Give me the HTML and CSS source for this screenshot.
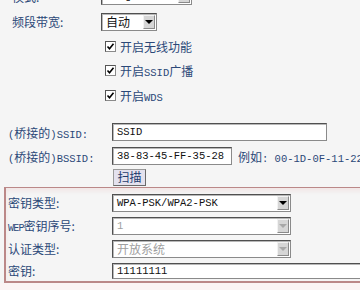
FILE: index.html
```html
<!DOCTYPE html>
<html lang="zh-CN">
<head>
    <meta charset="UTF-8">
    <title>无线网络基本设置</title>
    <link rel="stylesheet" href="styles.css">
</head>
<body>
    <div class="top">
        <div class="row r26">
            <span class="lbl lbl-top">模式:</span>
            <div class="sel w91"><span class="val en">11bgn mixed</span><i class="arr"></i></div>
        </div>
        <div class="row r25">
            <span class="lbl lbl-top">频段带宽:</span>
            <div class="sel w56"><span class="val">自动</span><i class="arr"></i></div>
        </div>
        <div class="checks">
            <label class="chk"><span class="box"><svg width="9" height="9" viewBox="0 0 9 9"><path d="M1.5 4.5l2 2.2 4-5" fill="none" stroke="#000" stroke-width="1.6"/></svg></span><span>开启无线功能</span></label>
            <label class="chk"><span class="box"><svg width="9" height="9" viewBox="0 0 9 9"><path d="M1.5 4.5l2 2.2 4-5" fill="none" stroke="#000" stroke-width="1.6"/></svg></span><span>开启<span class="en">SSID</span>广播</span></label>
            <label class="chk"><span class="box"><svg width="9" height="9" viewBox="0 0 9 9"><path d="M1.5 4.5l2 2.2 4-5" fill="none" stroke="#000" stroke-width="1.6"/></svg></span><span>开启<span class="en">WDS</span></span></label>
        </div>
    </div>

    <div class="bridge">
        <div class="row r24">
            <span class="lbl"><span class="en">(</span>桥接的<span class="en">)SSID:</span></span>
            <input class="inp w215" type="text" value="SSID">
        </div>
        <div class="row r24">
            <span class="lbl"><span class="en">(</span>桥接的<span class="en">)BSSID:</span></span>
            <input class="inp w120" type="text" value="38-83-45-FF-35-28">
            <span class="hint">例如<span class="en">: 00-1D-0F-11-22</span></span>
        </div>
        <div class="row r18">
            <span class="lbl"></span>
            <button class="btn" type="button">扫描</button>
        </div>
    </div>

    <div class="sec">
        <div class="row r23">
            <span class="lbl">密钥类型:</span>
            <div class="sel w179"><span class="val en">WPA-PSK/WPA2-PSK</span><i class="arr"></i></div>
        </div>
        <div class="row r23">
            <span class="lbl"><span class="en wep">WEP</span>密钥序号:</span>
            <div class="sel w179 off"><span class="val en">1</span><i class="arr"></i></div>
        </div>
        <div class="row r23">
            <span class="lbl">认证类型:</span>
            <div class="sel w179 off"><span class="val">开放系统</span><i class="arr"></i></div>
        </div>
        <div class="row r21">
            <span class="lbl">密钥:</span>
            <input class="inp key" type="text" value="11111111">
        </div>
    </div>
    <div class="foot"></div>
</body>
</html>
```

FILE: styles.css
```css
body {
    margin: 0;
    background-color: #f5f5f5;
    color: #2b4878;
    font-family: "Noto Sans CJK SC", sans-serif;
    font-size: 12px;
    overflow: hidden;
    height: 290px;
}
.en {
    font-family: "Liberation Mono", monospace;
    font-size: 10.5px;
}
.wep {
    font-size: 10px;
    letter-spacing: -0.8px;
}
.row {
    display: flex;
    align-items: center;
}
.r26 { height: 26px; }
.r25 { height: 25px; }
.r24 { height: 24px; }
.r23 { height: 23px; }
.r21 { height: 21px; }
.r18 { height: 18px; }

.top {
    margin-top: -17px;
    padding-left: 12px;
}
.lbl {
    width: 104px;
    flex-shrink: 0;
    white-space: nowrap;
}
.lbl-top {
    width: 89px;
}

/* select look-alike */
.sel {
    box-sizing: border-box;
    height: 18px;
    display: flex;
    align-items: center;
    justify-content: space-between;
    background-color: #fff;
    border: 1px solid #8a8a8a;
    border-top-color: #505050;
    border-left-color: #505050;
    box-shadow: inset 1px 1px 0 #b8b8b8;
    padding: 0 1px 0 4px;
    color: #111;
}
.w91 { width: 91px; }
.w56 { width: 56px; }
.w179 { width: 179px; }
.sel .arr {
    box-sizing: border-box;
    width: 12px;
    height: 14px;
    background-color: #d6d6d6;
    border: 1px solid #8a8a8a;
    border-top-color: #f2f2f2;
    border-left-color: #f2f2f2;
    display: flex;
    align-items: center;
    justify-content: center;
}
.sel .arr::after {
    content: "";
    border-left: 4px solid transparent;
    border-right: 4px solid transparent;
    border-top: 4px solid #000;
}
.sel.off .val {
    color: #a0a0a0;
}
.sel.off .arr::after {
    border-top-color: #a8a8a8;
}

/* checkboxes */
.checks {
    padding-left: 93px;
}
.chk {
    display: flex;
    align-items: center;
    height: 24.5px;
    gap: 4px;
}
.box {
    box-sizing: border-box;
    width: 11px;
    height: 11px;
    background-color: #fff;
    border: 1px solid #8a8a8a;
    border-top-color: #555;
    border-left-color: #555;
    display: flex;
    align-items: center;
    justify-content: center;
}

/* text inputs */
.bridge {
    margin-top: 12.5px;
    padding-left: 8px;
}
.inp {
    box-sizing: border-box;
    height: 18px;
    margin: 0;
    padding: 0 4px;
    background-color: #fff;
    border: 1px solid #8a8a8a;
    border-top-color: #505050;
    border-left-color: #505050;
    box-shadow: inset 1px 1px 0 #b8b8b8;
    font-family: "Liberation Mono", monospace;
    font-size: 10.5px;
    color: #111;
    outline: none;
}
.w215 { width: 215px; }
.w120 { width: 120px; }
.key {
    width: 260px;
    height: 16px;
}
.hint {
    margin-left: 6px;
    white-space: nowrap;
}
.btn {
    margin: 0 0 0 1px;
    height: 17px;
    width: 33px;
    padding: 0;
    background-color: #e4e2ee;
    border: 1px solid #6a6a6a;
    border-top-color: #9a9a9a;
    border-left-color: #9a9a9a;
    font-family: "Noto Sans CJK SC", sans-serif;
    font-size: 12px;
    line-height: 14px;
    color: #1f3c6e;
}

/* red framed security block */
.sec {
    margin: 1px 0 0 4px;
    width: 380px;
    box-sizing: border-box;
    border: 2px solid #bb8888;
    border-top-width: 1.5px;
    padding: 3px 0 0 2px;
    box-shadow: inset 0 3px 4px rgba(235, 200, 200, 0.35);
}
.foot {
    height: 20px;
    background-color: #fbf4f4;
}
```
